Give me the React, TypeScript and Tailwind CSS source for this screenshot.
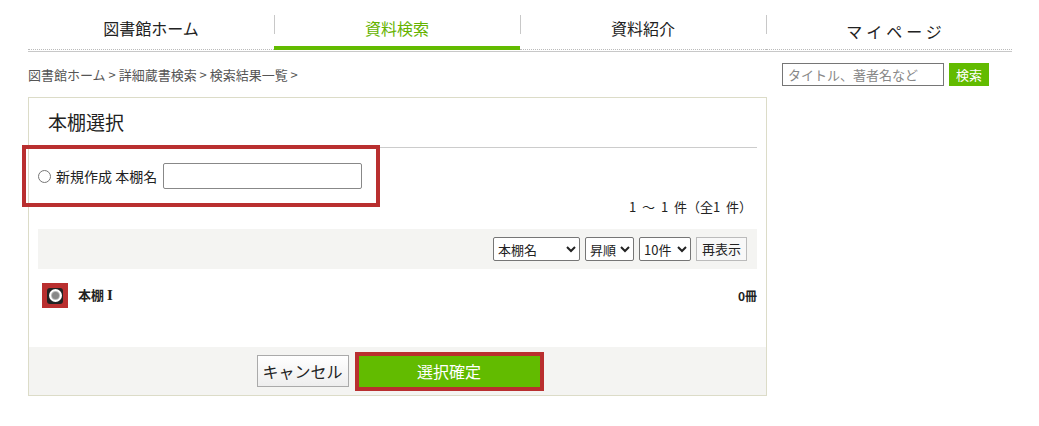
import React from "react";

const tabs = ["図書館ホーム", "資料検索", "資料紹介", "マイページ"];

const App: React.FC = () => {
  return (
    <div
      className="w-[1039px] h-[426px] bg-white text-[#222]"
      style={{ fontFamily: '"Noto Sans CJK JP", "Noto Sans", sans-serif' }}
    >
      {/* NAV */}
      <nav className="ml-[28px] w-[984px] pt-[10px]">
        <div className="flex">
          {tabs.map((t, i) => (
            <div key={t} className="relative w-[246px]">
              <div
                className={
                  "h-[36px] flex items-center justify-center text-[16px] " +
                  (i === 1 ? "text-[#66b300]" : "text-[#222]") +
                  (i === 3 ? " pt-[5px] pl-[14px] tracking-[4px]" : "")
                }
              >
                {t}
              </div>
              {i > 0 && <span className="absolute left-0 top-[5px] h-[19px] w-px bg-[#c8c8c8]" />}
              <div
                className={
                  i === 1
                    ? "h-[4px] bg-[#62bb00]"
                    : "h-[4px] flex items-end"
                }
              >
                {i !== 1 && <div className="w-full border-b border-dotted border-[#bbb]" />}
              </div>
            </div>
          ))}
        </div>
        <div className="h-px bg-[#c8c8c8] mt-px" />
      </nav>

      <div className="flex ml-[28px] mt-[10px]">
        {/* LEFT */}
        <div className="w-[739px]">
          <div className="h-[25px] flex items-center text-[13px] text-[#555] whitespace-pre">
            図書館ホーム &gt; 詳細蔵書検索 &gt; 検索結果一覧 &gt;
          </div>

          <div className="mt-[10px] border border-[#dcdcc8] relative">
            {/* header */}
            <div className="mx-[9px] h-[50px] border-b border-[#ccc] flex items-center pl-[10px] text-[19px]">
              本棚選択
            </div>

            {/* new shelf */}
            <div className="relative">
              <div className="absolute -left-[7px] -top-[3px] w-[358px] h-[62px] border-4 border-[#b92f2f]" />
              <div className="flex items-center pl-[9px] pt-[15px] text-[14px]">
                <input type="radio" name="shelf" className="m-0 w-[13px] h-[13px]" />
                <span className="ml-[5px] whitespace-pre">新規作成 本棚名</span>
                <input
                  type="text"
                  className="ml-[6px] w-[199px] h-[26px] border border-[#888] rounded-[2px] px-1 text-[13px]"
                />
              </div>
            </div>

            <div className="flex justify-end pr-[14px] mt-[10px] text-[13px] h-[16px] items-center whitespace-pre">
              1  ～  1  件（全1  件）
            </div>

            {/* toolbar */}
            <div className="mx-[9px] mt-[14px] h-[40px] bg-[#f4f4f2] flex items-center justify-end gap-[5px] pr-[10px] text-[13px]">
              <select className="w-[87px] h-[24px] border border-[#767676] rounded-[2px] bg-white text-[13px]">
                <option>本棚名</option>
              </select>
              <select className="w-[49px] h-[24px] border border-[#767676] rounded-[2px] bg-white text-[13px]">
                <option>昇順</option>
              </select>
              <select className="w-[52px] h-[24px] border border-[#767676] rounded-[2px] bg-white text-[13px]">
                <option>10件</option>
              </select>
              <button className="w-[51px] h-[24px] border border-[#bbb] bg-[#f8f8f8] text-[13px]">
                再表示
              </button>
            </div>

            {/* row */}
            <div className="flex items-center mt-[14px] h-[25px] pl-[13px] pr-[9px]">
              <div className="w-[26px] h-[25px] bg-[#b92f2f] flex items-center justify-center">
                <div className="w-[16px] h-[16px] bg-[#222] rounded-[3px] flex items-center justify-center">
                  <div className="w-[13px] h-[13px] rounded-full bg-[#bbb] border-2 border-white flex items-center justify-center">
                    <div className="w-[7px] h-[7px] rounded-full bg-[#888]" />
                  </div>
                </div>
              </div>
              <span className="ml-[10px] text-[13px] font-bold">
                本棚 <span className="text-[15px]" style={{ fontFamily: '"Liberation Serif", serif' }}>I</span>
              </span>
              <span className="ml-auto text-[12px] font-bold">0冊</span>
            </div>

            {/* footer */}
            <div className="mt-[39px] h-[48px] bg-[#f4f4f2] flex items-center justify-center gap-[6px] pl-[5px]">
              <button className="w-[92px] h-[32px] border border-[#aaa] bg-gradient-to-b from-white to-[#eee] text-[16px] text-[#222]">
                キャンセル
              </button>
              <div className="border-4 border-[#b92f2f]">
                <button className="w-[181px] h-[31px] bg-[#62bb00] text-white text-[16px]">
                  選択確定
                </button>
              </div>
            </div>
          </div>
        </div>

        {/* RIGHT */}
        <div className="ml-[15px] flex items-start gap-[5px] mt-[1px]">
          <input
            type="text"
            placeholder="タイトル、著者名など"
            className="w-[162px] h-[23px] border border-[#767676] px-[5px] text-[13px] placeholder-[#888]"
          />
          <button className="w-[40px] h-[23px] bg-[#62bb00] text-white text-[13px]">検索</button>
        </div>
      </div>
    </div>
  );
};

export default App;
